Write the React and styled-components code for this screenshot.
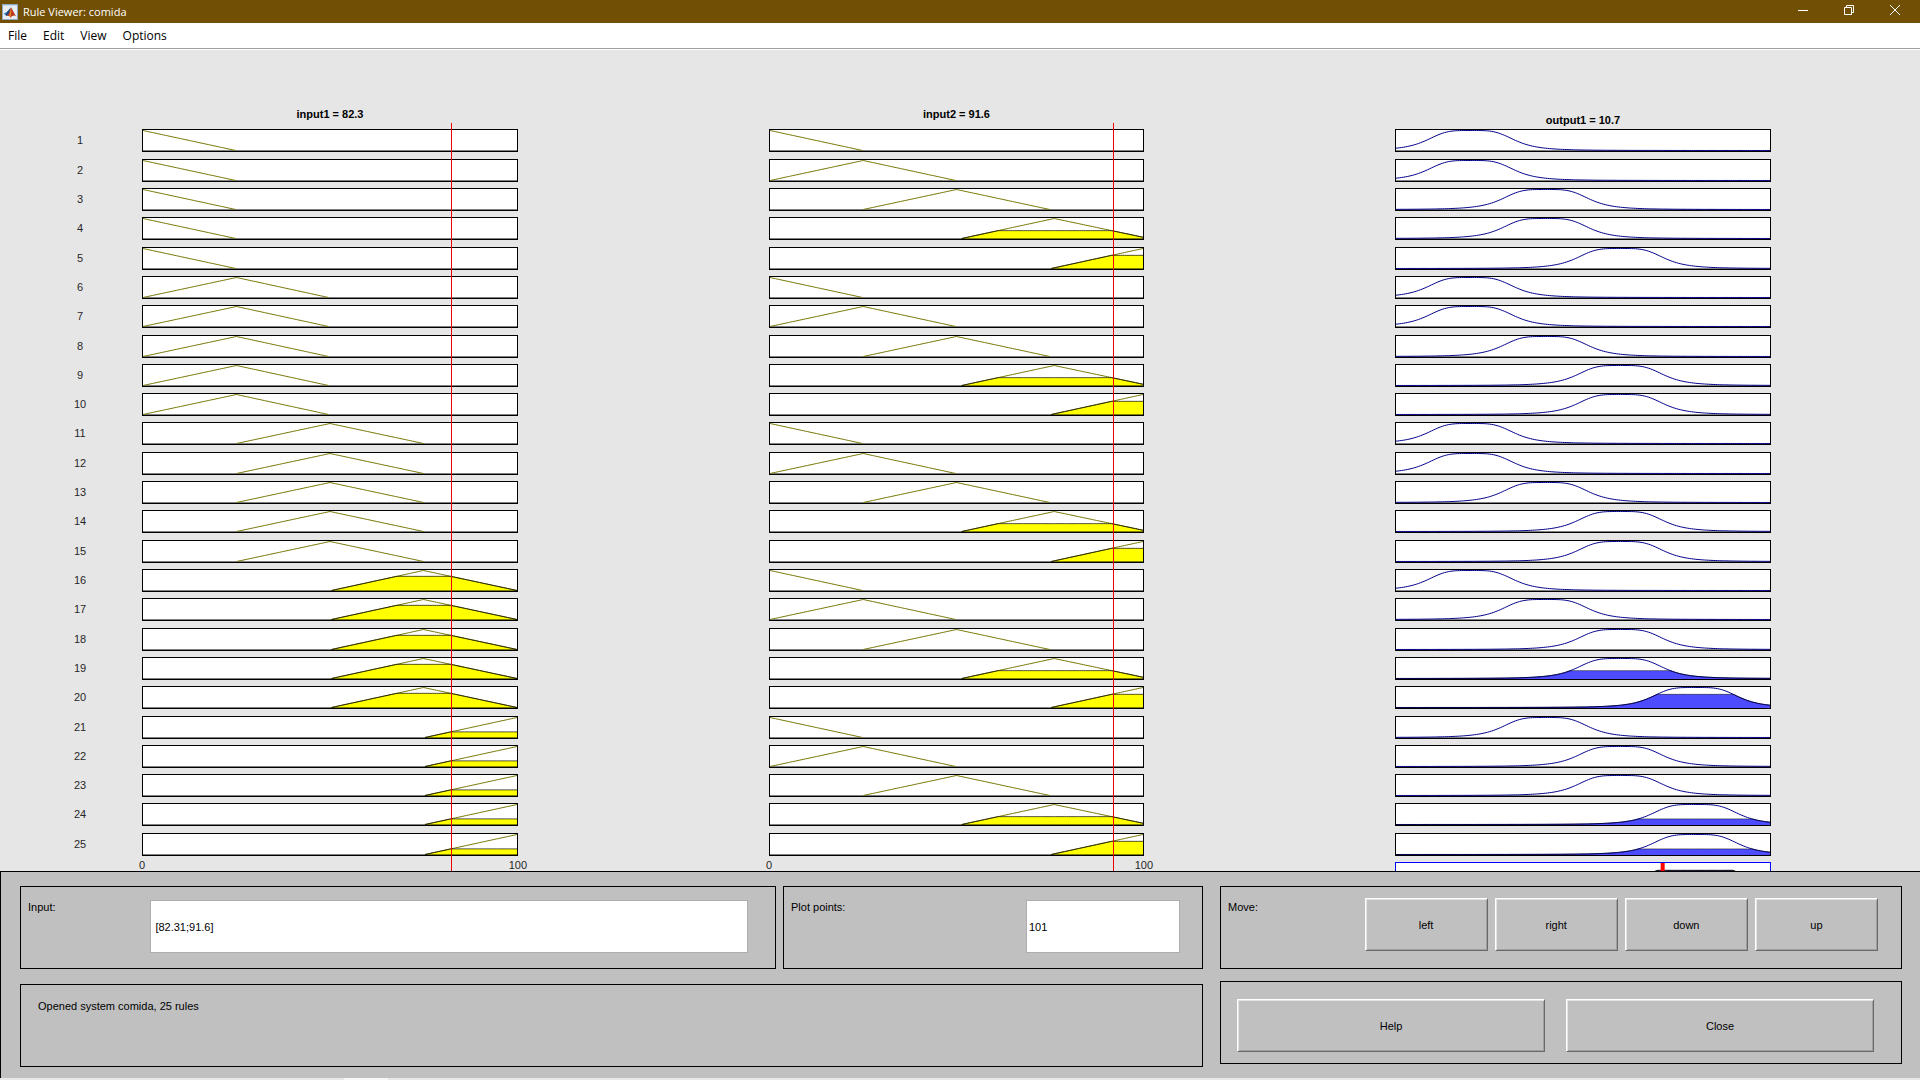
import React from "react";
import styled, { createGlobalStyle } from "styled-components";

const PageStyle = createGlobalStyle`
  *, *::before, *::after { box-sizing: border-box; }
  html, body { margin: 0; }
  body { background: #e6e6e6; overflow: hidden; }
  button, input { font: inherit; color: inherit; }
`;

const Window = styled.div`
  display: flex;
  flex-direction: column;
  height: 100vh;
  font: 11px/13px "Liberation Sans", Arial, sans-serif;
  color: #000;
`;

const TitleBar = styled.header`
  display: flex;
  align-items: center;
  height: 23px;
  flex: none;
  padding: 0 2px;
  gap: 5px;
  background: #714f04;
  color: #fff;
  font: 11px/16px "Open Sans", "Noto Sans", sans-serif;
`;

const WindowTitle = styled.h1`
  flex: 1;
  margin: 0;
  font: inherit;
`;

const CaptionButtons = styled.div`
  display: flex;
  padding-bottom: 3px;
`;

const CaptionButton = styled.button`
  display: grid;
  place-items: center;
  width: 46px;
  height: 20px;
  padding: 0;
  border: 0;
  background: none;
`;

const MenuBar = styled.nav`
  display: flex;
  align-items: center;
  flex: none;
  height: 27px;
  padding: 0 0 1px 1px;
  gap: 2px;
  background: #fff;
  border-bottom: 1px solid #fff;
  box-shadow: inset 0 -1px #a0a0a0;
  font: 12px/16px "Open Sans", "Noto Sans", sans-serif;
`;

const MenuItem = styled.button`
  padding: 0 7px;
  border: 0;
  background: none;
`;

const Canvas = styled.main`
  display: grid;
  grid-template-columns: 142fr 376fr 251fr 375fr 251fr 376fr 149fr;
  align-items: start;
  flex: 1;
  min-height: 0;
  overflow: hidden;
  padding-top: 57px;
`;

const Column = styled.section`
  grid-column: ${(p) => p.$track};
  position: relative;
`;

const ColumnTitle = styled.h2`
  height: 22px;
  margin: 0;
  padding-top: ${(p) => (p.$low ? 6 : 0)}px;
  font: bold 11px/14px "Liberation Sans", Arial, sans-serif;
  text-align: center;
`;

/* Roughly every third gap is a pixel wider, which spreads the 25 rules evenly. */
const Stack = styled.div`
  display: flex;
  flex-direction: column;
  gap: 6px;
  padding-top: ${(p) => p.$offset || 0}px;

  & > *:nth-child(3n + 1):nth-child(-n + 7),
  & > *:nth-child(3n + 2):nth-child(n + 11):nth-child(-n + 20),
  & > *:nth-child(24) {
    margin-bottom: 1px;
  }
`;

const RuleNumber = styled.span`
  height: 23px;
  padding-left: 18px;
  line-height: 23px;
  text-align: center;
  color: #262626;
`;

const PlotBox = styled.div`
  height: 23px;
  background: #fff;
  border: 1px solid ${(p) => p.$color || "#000"};

  svg {
    display: block;
    width: 100%;
    height: 21px;
    overflow: visible;
  }
`;

const Cursor = styled.div`
  position: absolute;
  top: 16px;
  bottom: -20px;
  width: 1px;
  background: #f00000;
`;

const Axis = styled.div`
  display: flex;
  justify-content: space-between;
  margin: 3px -9px 0 -3px;
  color: #262626;
`;

const Panel = styled.footer`
  display: grid;
  grid-template-columns: 1183fr 682fr;
  column-gap: 17px;
  flex: none;
  padding: 14px 18px 11px 19px;
  background: #c0c0c0;
  border: solid #000;
  border-width: 1px 0 0 1px;
`;

const PanelSide = styled.div`
  display: flex;
  flex-direction: column;
  gap: ${(p) => p.$gap}px;
`;

const FieldRow = styled.div`
  display: grid;
  grid-template-columns: 756fr 420fr;
  gap: 7px;
`;

const Frame = styled.div`
  display: flex;
  justify-content: space-between;
  align-items: flex-start;
  height: 83px;
  padding: ${(p) => p.$pad};
  border: 1px solid #000;
`;

const Caption = styled.label`
  padding-top: ${(p) => p.$top || 0}px;
`;

const TextField = styled.input`
  width: ${(p) => p.$width};
  height: 53px;
  padding: 0 ${(p) => p.$inset}px;
  border: 1px solid #abadb3;
  border-radius: 0;
  background: #fff;
  outline: 0;
`;

const Status = styled.output`
  display: block;
`;

const ButtonRow = styled.div`
  display: grid;
  grid-template-columns: repeat(${(p) => p.$count}, 1fr);
  gap: ${(p) => p.$gap}px;
  width: ${(p) => p.$share};
`;

const PushButton = styled.button`
  height: 53px;
  padding: 1px 0 0;
  background: #c0c0c0;
  border: 1px solid;
  border-color: #fff #696969 #696969 #fff;
  border-radius: 0;
  box-shadow: inset 1px 1px #e3e3e3, inset -1px -1px #a0a0a0;
`;

const TaskbarEdge = styled.div`
  flex: none;
  height: 2px;
  padding-left: 344px;
  background: #e8e8e8;

  &::before {
    content: "";
    display: block;
    width: 44px;
    height: 2px;
    background: #f7f7f7;
  }
`;

/* Triangular sets of the two inputs: left foot, peak, right foot. */
const INPUT1_SETS = [
  [-25, 0, 24.8],
  [0, 25, 49.6],
  [25, 50, 75],
  [50.4, 75, 100],
  [75.4, 100, 125],
];
const INPUT2_SETS = [
  [-25, 0, 24.8],
  [0, 25, 49.8],
  [25, 50, 75],
  [51.4, 76.2, 101.6],
  [75.4, 100, 125],
];
const OUTPUT_CENTERS = [20, 40, 60, 80];
/* Output set used by each of the 25 rules. */
const CONSEQUENTS = [
  0, 0, 1, 1, 2, 0, 0, 1, 2, 2, 0, 0, 1, 2, 2, 0, 1, 2, 2, 3, 1, 2, 2, 3, 3,
];
const INPUT1 = 82.31;
const INPUT2 = 91.6;

const XS = Array.from({ length: 201 }, (_, i) => i / 2);
const plotY = (v) => 0.5 + (1 - v) * 20;
const triangle = ([a, b, c]) => (x) =>
  Math.max(0, Math.min((x - a) / (b - a), (c - x) / (c - b)));
const bell = (center) => (x) => 1 / (1 + Math.abs((x - center) / 12) ** 4);

const trace = (f, xs = XS) =>
  xs.map((x) => `${x.toFixed(2)},${plotY(f(x)).toFixed(2)}`).join(" ");

function Plot({ fn, points = XS, level, line, fill, edge = 0.7, base = true, support = [0, 100] }) {
  const fired = level > 0.02;
  const inside = points.filter((x) => x >= support[0] && x <= support[1]);
  const last = inside[inside.length - 1];
  const clipped = (x) => Math.min(fn(x), level);
  return (
    <PlotBox>
      <svg viewBox="0 0 100 21" preserveAspectRatio="none" aria-hidden="true">
        <path d="M0 20.5H100" stroke="#808080" vectorEffect="non-scaling-stroke" />
        {fired && (
          <polygon
            points={`${inside[0]},21 ${trace(clipped, inside)} ${last},21`}
            fill={fill}
          />
        )}
        <polyline
          points={trace(fn, inside)}
          fill="none"
          stroke={line}
          vectorEffect="non-scaling-stroke"
        />
        {fired && (
          <polyline
            points={trace(clipped, inside)}
            fill="none"
            stroke="#000"
            strokeOpacity={edge}
            vectorEffect="non-scaling-stroke"
          />
        )}
        {fired && base && (
          <path
            d={`M${inside[0]} 20.5H${last}`}
            stroke="#000"
            strokeOpacity="0.5"
            vectorEffect="non-scaling-stroke"
          />
        )}
      </svg>
    </PlotBox>
  );
}

function InputColumn({ name, shown, value, sets, pick, track }) {
  return (
    <Column $track={track}>
      <ColumnTitle>{`${name} = ${shown}`}</ColumnTitle>
      <Stack>
        {CONSEQUENTS.map((_, i) => {
          const set = sets[pick(i)];
          const fn = triangle(set);
          return (
            <Plot
              key={i}
              fn={fn}
              level={fn(value)}
              support={[Math.max(0, set[0]), Math.min(100, set[2])]}
              points={[...XS, value, ...set].sort((p, q) => p - q)}
              line="#757500"
              fill="#ff0"
            />
          );
        })}
      </Stack>
      <Axis>
        <span>0</span>
        <span>100</span>
      </Axis>
      <Cursor style={{ left: `${value}%` }} />
    </Column>
  );
}

const strength = (i) =>
  Math.min(
    triangle(INPUT1_SETS[Math.floor(i / 5)])(INPUT1),
    triangle(INPUT2_SETS[i % 5])(INPUT2)
  );

const aggregate = (x) =>
  Math.max(
    ...CONSEQUENTS.map((c, i) => Math.min(strength(i), bell(OUTPUT_CENTERS[c])(x)))
  );

function OutputColumn() {
  return (
    <Column $track={6}>
      <ColumnTitle $low>output1 = 10.7</ColumnTitle>
      <Stack>
        {CONSEQUENTS.map((c, i) => (
          <Plot
            key={i}
            fn={bell(OUTPUT_CENTERS[c])}
            level={strength(i)}
            line="#00008b"
            fill="#4d4dff"
            edge={0.5}
            base={false}
          />
        ))}
        <PlotBox $color="#0000ff">
          <svg viewBox="0 0 100 21" preserveAspectRatio="none" aria-hidden="true">
            <polygon points={`0,20.5 ${trace(aggregate)} 100,20.5`} fill="#4d4dff" />
            <polyline points={trace(aggregate)} fill="none" stroke="#000" vectorEffect="non-scaling-stroke" />
            <path d="M71.3 0V21" stroke="#f00" strokeWidth="4" vectorEffect="non-scaling-stroke" />
          </svg>
        </PlotBox>
      </Stack>
    </Column>
  );
}

function AppIcon() {
  return (
    <svg width="16" height="16" viewBox="0 0 16 16" aria-hidden="true">
      <rect width="16" height="16" fill="#8fa9c4" />
      <rect x="1" y="2" width="14" height="13" fill="#e9edf1" />
      <rect x="1" y="1" width="14" height="1" fill="#c9d9ea" />
      <path d="M1.500 9.500 5 8 9 3.500 7.500 10.500 4.500 12Z" fill="#3f86c4" />
      <path d="M5 8 9 3.500 7 9.500 4.500 12 3.500 10.800Z" fill="#234a7c" />
      <path d="M9 3.500C10.500 5 11.500 9 14.500 12.500 12.500 11 10.500 11 8.500 14 8 12 7 11.500 4.500 12 7 10.500 8 6 9 3.500Z" fill="#b5361a" />
      <path d="M9 3.500C9.800 6 9.500 10 8.500 14 8 12 7.500 11.500 7 11.500 8 9 8.500 6 9 3.500Z" fill="#ee7f26" />
    </svg>
  );
}

export default function App() {
  return (
    <Window>
      <PageStyle />
      <TitleBar>
        <AppIcon />
        <WindowTitle>Rule Viewer: comida</WindowTitle>
        <CaptionButtons>
          <CaptionButton aria-label="Minimize">
            <svg width="10" height="10" viewBox="0 0 10 10">
              <path d="M0 5.500H10" stroke="#fff" />
            </svg>
          </CaptionButton>
          <CaptionButton aria-label="Restore">
            <svg width="10" height="10" viewBox="0 0 10 10" fill="none" stroke="#fff">
              <path d="M.5 2.500H7.500V9.500H.5ZM2.500 2.500V.5H9.500V7.500H7.500" />
            </svg>
          </CaptionButton>
          <CaptionButton aria-label="Close window">
            <svg width="10" height="10" viewBox="0 0 10 10">
              <path d="M0 0 10 10M10 0 0 10" stroke="#fff" />
            </svg>
          </CaptionButton>
        </CaptionButtons>
      </TitleBar>
      <MenuBar>
        {["File", "Edit", "View", "Options"].map((name) => (
          <MenuItem key={name}>{name}</MenuItem>
        ))}
      </MenuBar>

      <Canvas>
        <Column $track={1}>
          <Stack $offset={22}>
            {CONSEQUENTS.map((_, i) => (
              <RuleNumber key={i}>{i + 1}</RuleNumber>
            ))}
          </Stack>
        </Column>
        <InputColumn
          name="input1"
          shown="82.3"
          value={INPUT1}
          sets={INPUT1_SETS}
          pick={(i) => Math.floor(i / 5)}
          track={2}
        />
        <InputColumn
          name="input2"
          shown="91.6"
          value={INPUT2}
          sets={INPUT2_SETS}
          pick={(i) => i % 5}
          track={4}
        />
        <OutputColumn />
      </Canvas>

      <Panel>
        <PanelSide $gap={15}>
          <FieldRow>
            <Frame $pad="13px 27px 0 7px">
              <Caption htmlFor="rule-input" $top={1}>Input:</Caption>
              <TextField id="rule-input" $width="83%" $inset={4} defaultValue="[82.31;91.6]" />
            </Frame>
            <Frame $pad="13px 22px 0 7px">
              <Caption htmlFor="plot-points" $top={1}>Plot points:</Caption>
              <TextField id="plot-points" $width="154px" $inset={2} defaultValue="101" />
            </Frame>
          </FieldRow>
          <Frame $pad="15px 17px 0">
            <Status>Opened system comida, 25 rules</Status>
          </Frame>
        </PanelSide>
        <PanelSide $gap={12}>
          <Frame $pad="11px 23px 0 7px">
            <Caption as="span" $top={3}>Move:</Caption>
            <ButtonRow $count={4} $gap={7} $share="79%">
              {["left", "right", "down", "up"].map((name) => (
                <PushButton key={name}>{name}</PushButton>
              ))}
            </ButtonRow>
          </Frame>
          <Frame $pad="17px 27px 0 16px">
            <ButtonRow $count={2} $gap={21} $share="100%">
              <PushButton>Help</PushButton>
              <PushButton>Close</PushButton>
            </ButtonRow>
          </Frame>
        </PanelSide>
      </Panel>
      <TaskbarEdge />
    </Window>
  );
}
